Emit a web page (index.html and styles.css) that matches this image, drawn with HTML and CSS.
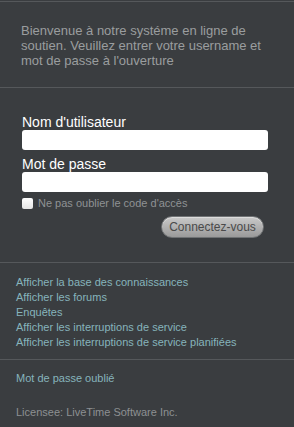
FILE: index.html
```html
<!DOCTYPE html>
<html lang="fr">
<head>
<meta charset="utf-8">
<link rel="stylesheet" href="styles.css">
</head>
<body>
<div class="page">
  <div class="welcome">
    <p>Bienvenue à notre systéme en ligne de soutien. Veuillez entrer votre username et mot de passe à l'ouverture</p>
  </div>
  <form class="login">
    <label class="lbl">Nom d'utilisateur</label>
    <input class="field" type="text">
    <label class="lbl lbl2">Mot de passe</label>
    <input class="field" type="password">
    <div class="remember">
      <span class="box"></span>
      <span class="remember-text">Ne pas oublier le code d'accès</span>
    </div>
    <div class="actions">
      <button type="button" class="btn">Connectez-vous</button>
    </div>
  </form>
  <div class="links">
    <a>Afficher la base des connaissances</a>
    <a>Afficher les forums</a>
    <a>Enquêtes</a>
    <a>Afficher les interruptions de service</a>
    <a>Afficher les interruptions de service planifiées</a>
  </div>
  <div class="footer">
    <a class="forgot">Mot de passe oublié</a>
    <p class="licensee">Licensee: LiveTime Software Inc.</p>
  </div>
</div>
</body>
</html>
```
FILE: styles.css
```css
html, body {
  margin: 0;
  padding: 0;
  background: #3a3d40;
  font-family: "Liberation Sans", Arial, sans-serif;
}
.page {
  width: 294px;
  height: 427px;
  overflow: hidden;
  padding-top: 1px;
}
.welcome {
  border-top: 1px solid #55585b;
  border-bottom: 1px solid #55585b;
  height: 87px;
  box-sizing: border-box;
  padding: 21px 21px 0 21px;
}
.welcome p {
  margin: 0;
  font-size: 13px;
  line-height: 15px;
  color: #9a9d9f;
}
.login {
  margin: 0;
  height: 175px;
  box-sizing: border-box;
  padding: 26px 26px 0 22px;
  border-bottom: 1px solid #55585b;
  display: flex;
  flex-direction: column;
}
.lbl {
  display: block;
  color: #ffffff;
  font-size: 14px;
  line-height: 16px;
  height: 16px;
}
.lbl2 {
  margin-top: 6px;
}
.field {
  display: block;
  width: 246px;
  height: 20px;
  box-sizing: border-box;
  margin: 0;
  border: none;
  border-radius: 3px;
  background: #ffffff;
  padding: 0 4px;
}
.remember {
  display: flex;
  align-items: center;
  margin-top: 4px;
  height: 13px;
}
.box {
  width: 11px;
  height: 11px;
  background: linear-gradient(#ffffff, #e4e4e4);
  border-radius: 2px;
  margin-top: 2px;
}
.remember-text {
  margin-left: 5px;
  font-size: 11px;
  color: #8f9294;
}
.actions {
  display: flex;
  justify-content: flex-end;
  margin-top: 7px;
}
.btn {
  width: 103px;
  height: 22px;
  margin-right: 4px;
  border: 1px solid #6f7274;
  border-radius: 11px;
  background: linear-gradient(#c9c9c9, #9a9a9a);
  color: #4a4a4a;
  font-family: "Liberation Sans", Arial, sans-serif;
  font-size: 12px;
  padding: 0;
  box-shadow: inset 0 1px 0 #dcdcdc;
}
.links {
  height: 97px;
  box-sizing: border-box;
  padding: 12px 16px 0 16px;
  border-bottom: 1px solid #55585b;
  display: flex;
  flex-direction: column;
}
.links a, .forgot {
  display: block;
  color: #86b4bc;
  font-size: 11px;
  line-height: 15px;
}
.footer {
  padding: 11px 16px 0 16px;
}
.licensee {
  margin: 19px 0 0 0;
  font-size: 11px;
  line-height: 15px;
  color: #8d9092;
}
```
